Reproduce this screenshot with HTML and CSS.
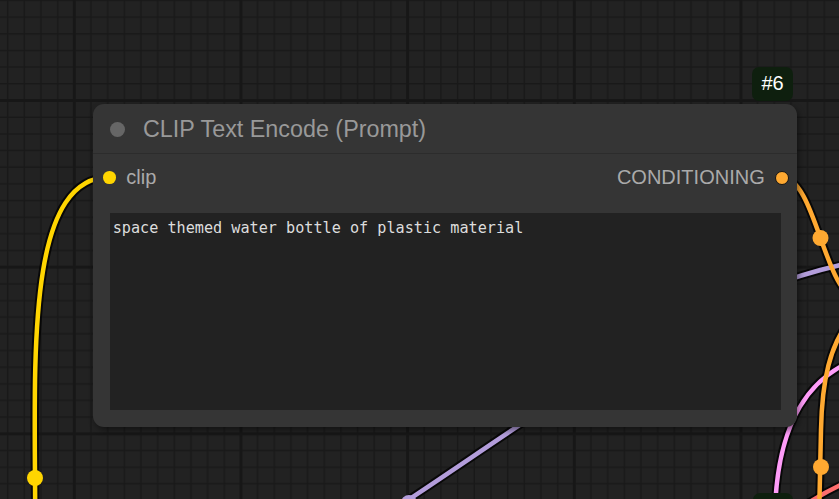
FILE: index.html
```html
<!DOCTYPE html>
<html lang="en">
<head>
<meta charset="utf-8">
<title>CLIP Text Encode (Prompt)</title>
<link rel="stylesheet" href="styles.css">
</head>
<body>
<div class="canvas">
  <svg class="wires" width="839" height="499" viewBox="0 0 839 499" xmlns="http://www.w3.org/2000/svg">
    <defs>
      <pattern id="grid" patternUnits="userSpaceOnUse" x="72.8" y="99" width="166.667" height="166.667">
        <rect width="166.667" height="166.667" fill="#222222"/>
        <g stroke="#191919" stroke-width="1.5">
          <path d="M18.17 0V166.667M34.83 0V166.667M51.5 0V166.667M68.17 0V166.667M84.83 0V166.667M101.5 0V166.667M118.17 0V166.667M134.83 0V166.667M151.5 0V166.667"/>
          <path d="M0 18.17H166.667M0 34.83H166.667M0 51.5H166.667M0 68.17H166.667M0 84.83H166.667M0 101.5H166.667M0 118.17H166.667M0 134.83H166.667M0 151.5H166.667"/>
        </g>
        <g stroke="#171717" stroke-width="3">
          <path d="M1.5 0V166.667M0 1.5H166.667"/>
        </g>
      </pattern>
    </defs>
    <rect width="839" height="499" fill="url(#grid)"/>
    <g fill="none" stroke-linecap="round">
      <g stroke="#000" stroke-opacity="0.75" stroke-width="8.5">
        <path d="M390 512C560 400 700 290 860 261"/>
        <path d="M860 358C810 375 778 420 775 510"/>
        <path d="M805 505Q825 492 845 483"/>
        <path d="M850 320C830 345 822 380 821 430L819 520"/>
        <path d="M781 177C817 177 824 299 860 299"/>
        <path d="M-40 779C115 779 -45 177 110 177"/>
      </g>
      <path stroke="#B39DDB" stroke-width="4.5" d="M390 512C560 400 700 290 860 261"/>
      <path stroke="#FF9CF9" stroke-width="4.5" d="M860 358C810 375 778 420 775 510"/>
      <path stroke="#FF6E6E" stroke-width="4.5" d="M805 505Q825 492 845 483"/>
      <path stroke="#FFA931" stroke-width="4.5" d="M850 320C830 345 822 380 821 430L819 520"/>
      <path stroke="#FFA931" stroke-width="4.5" d="M781 177C817 177 824 299 860 299"/>
      <path stroke="#FFD500" stroke-width="4.5" d="M-40 779C115 779 -45 177 110 177"/>
    </g>
    <circle cx="35" cy="478" r="8" fill="#FFD500"/>
    <circle cx="820.5" cy="238" r="8" fill="#FFA931"/>
    <circle cx="821" cy="467" r="8" fill="#FFA931"/>
    <circle cx="409" cy="503" r="8" fill="#B39DDB"/>
  </svg>

  <div class="badge badge-top">#6</div>

  <div class="node">
    <div class="node-title">
      <span class="title-dot"></span>
      <span class="title-text">CLIP Text Encode (Prompt)</span>
    </div>
    <div class="slots">
      <div class="slot">
        <span class="slot-dot slot-dot-clip"></span>
        <span class="slot-label">clip</span>
      </div>
      <div class="slot">
        <span class="slot-label">CONDITIONING</span>
        <span class="slot-dot slot-dot-cond"></span>
      </div>
    </div>
    <textarea class="prompt" spellcheck="false">space themed water bottle of plastic material</textarea>
  </div>

  <div class="badge badge-bottom"></div>
</div>
</body>
</html>
```

FILE: styles.css
```css
html, body {
  margin: 0;
  padding: 0;
  background: #222222;
  overflow: hidden;
}

.canvas {
  position: relative;
  width: 839px;
  height: 499px;
  overflow: hidden;
  font-family: "Liberation Sans", Arial, sans-serif;
}

.wires {
  position: absolute;
  left: 0;
  top: 0;
  display: block;
}

.node {
  position: absolute;
  left: 93px;
  top: 104px;
  width: 704px;
  height: 323px;
  box-sizing: border-box;
  background: #353535;
  border-radius: 11px;
  box-shadow: 2px 3px 6px rgba(0, 0, 0, 0.45);
  display: flex;
  flex-direction: column;
}

.node-title {
  flex: none;
  height: 50px;
  box-sizing: border-box;
  border-bottom: 1px solid #2c2c2c;
  display: flex;
  align-items: center;
  gap: 18px;
  padding: 1px 0 0 17px;
}

.title-dot {
  width: 15px;
  height: 15px;
  border-radius: 50%;
  background: #666666;
  flex: none;
}

.title-text {
  font-size: 23.33px;
  color: #999999;
  white-space: nowrap;
}

.slots {
  flex: none;
  height: 47px;
  display: flex;
  align-items: center;
  justify-content: space-between;
  padding: 0 8px 0 10.3px;
}

.slot {
  display: flex;
  align-items: center;
  gap: 10.3px;
}

.slot-label {
  font-size: 20px;
  color: #aaaaaa;
  white-space: nowrap;
}

.slot-dot {
  border-radius: 50%;
  flex: none;
}

.slot-dot-clip {
  width: 12.7px;
  height: 12.7px;
  background: #FFD500;
}

.slot-dot-cond {
  width: 12px;
  height: 12px;
  background: #FFA931;
  border: 1.5px solid #151515;
}

.prompt {
  flex: 1;
  margin: 12.3px 16.3px 16.7px 16.7px;
  padding: 5.5px 3px 3px;
  background: #222222;
  color: #dddddd;
  border: 0;
  outline: none;
  resize: none;
  overflow: hidden;
  font-family: "DejaVu Sans Mono", monospace;
  font-size: 15.17px;
  line-height: 19.5px;
}

.badge {
  position: absolute;
  box-sizing: border-box;
  background: #0e1f0e;
  border-radius: 7px;
  color: #ffffff;
  font-size: 20px;
  display: flex;
  align-items: center;
  justify-content: center;
}

.badge-top {
  left: 752px;
  top: 67px;
  width: 41px;
  height: 33.5px;
}

.badge-bottom {
  left: 753px;
  top: 493px;
  width: 40px;
  height: 33px;
}
```
